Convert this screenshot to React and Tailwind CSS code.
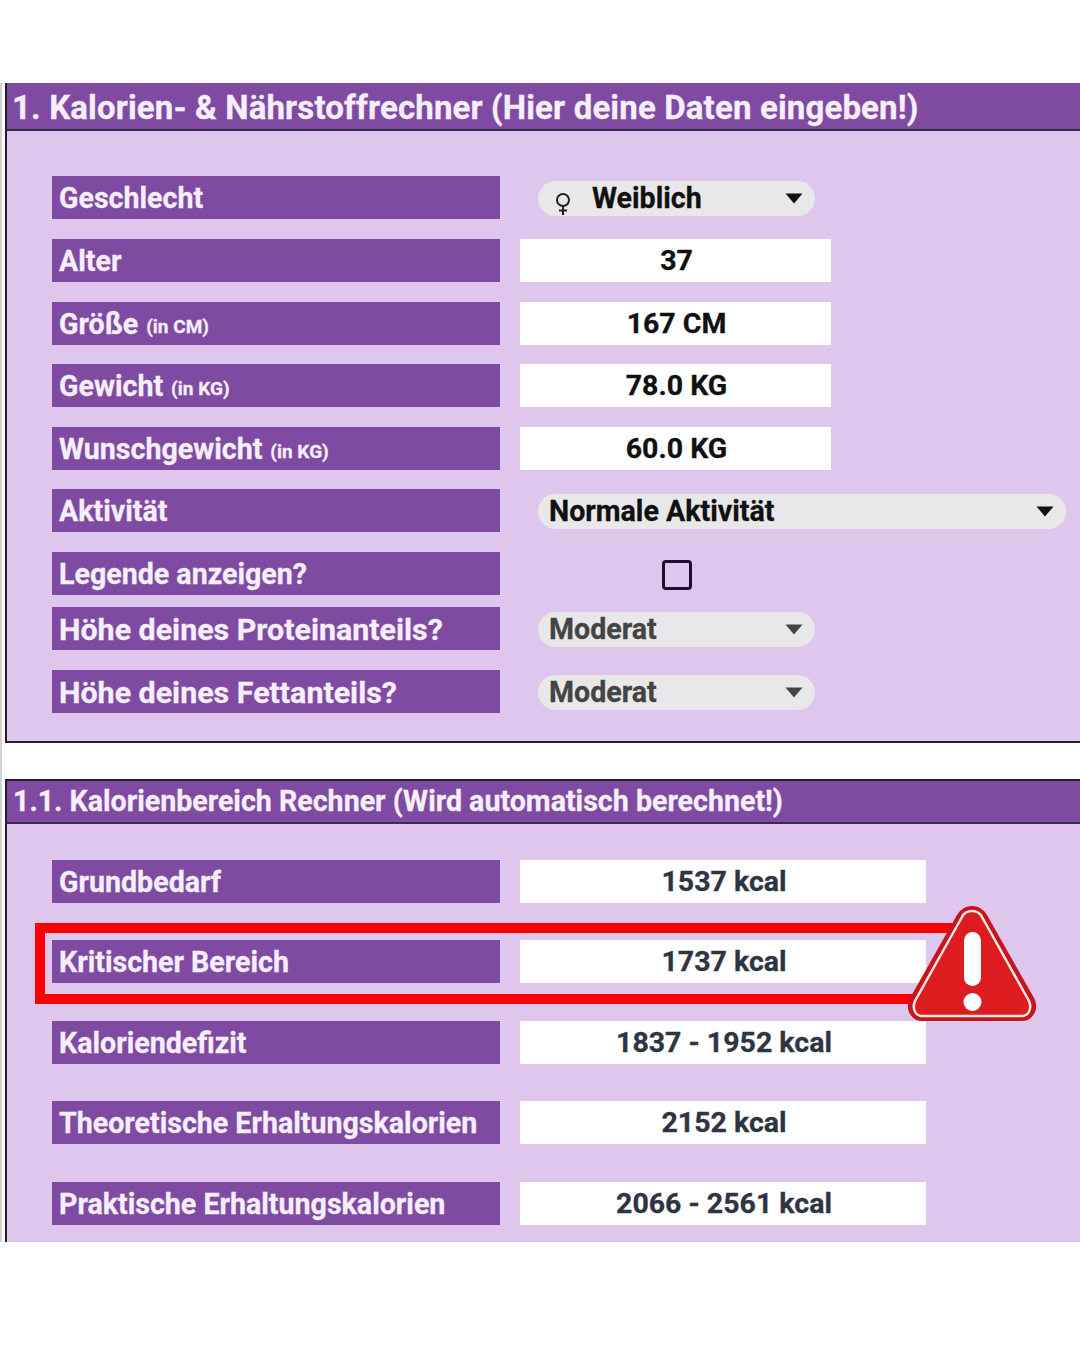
import React from "react";

const font = { fontFamily: "Roboto, sans-serif" };

function Label({ children, unit, big }) {
  return (
    <div
      className={`${big ? "text-[30.4px]" : "text-[28.6px]"} w-[448px] h-[43px] shrink-0 bg-[#7f4ba2] flex items-center pl-[7px] pt-[2px] font-bold text-[#f6eefa] whitespace-nowrap`}
    >
      {children}
      {unit && <span className="ml-[8px] mt-[5px] text-[19px]">{unit}</span>}
    </div>
  );
}

function Value({ children, wide }) {
  return (
    <div
      className={`${wide ? "w-[406px] text-[#2f3442] text-[28.5px]" : "w-[311px] text-[#111] text-[28.5px]"} h-[43px] ml-[20px] pt-[2px] pl-[2px] bg-white flex items-center justify-center font-bold`}
    >
      {children}
    </div>
  );
}

function Caret({ muted }) {
  return (
    <svg width="18" height="11" viewBox="0 0 18 11" className="shrink-0">
      <path d="M0.5 0.5 H17.5 L9 10.5 Z" fill={muted ? "#444" : "#111"} />
    </svg>
  );
}

function Select({ children, wide, muted, icon }) {
  return (
    <div
      className={`${wide ? "w-[528px]" : "w-[277px]"} ${muted ? "text-[#444]" : "text-[#111]"} h-[35px] ml-[38px] mt-[2px] pr-[12px] pl-[11px] rounded-[18px] bg-[#e8e8ea] flex items-center text-[28.6px] font-bold`}
    >
      {icon}
      <span className="flex-1 whitespace-nowrap">{children}</span>
      <Caret muted={muted} />
    </div>
  );
}

const FemaleIcon = (
  <svg width="16" height="24" viewBox="0 0 16 24" className="ml-[6px] mr-[21px] mt-[10px] shrink-0">
    <circle cx="8" cy="8" r="6" fill="none" stroke="#222" strokeWidth="2" />
    <path d="M8 14 V23 M4 18.5 H12" stroke="#222" strokeWidth="2" fill="none" />
  </svg>
);

function Row({ label, unit, big, mt, children }) {
  return (
    <div className={`flex items-center ${mt}`}>
      <Label unit={unit} big={big}>{label}</Label>
      {children}
    </div>
  );
}

function Warning() {
  return (
    <svg width="130" height="118" viewBox="0 0 130 118" className="absolute left-[855px] top-[-35px] overflow-visible">
      <path
        d="M65 1 C58 1 53 5 50 10 L3 93 C-3 104 4 116 15 116 H115 C126 116 133 104 127 93 L80 10 C77 5 72 1 65 1 Z"
        fill="#c4161c"
      />
      <path
        d="M65 6 C61 6 57 8 55 12 L8 96 C5 103 8 111 15 111 H115 C122 111 125 103 122 96 L75 12 C73 8 69 6 65 6 Z"
        fill="#dc1c1f"
        stroke="#fbe4e4"
        strokeWidth="2.5"
      />
      <rect x="57" y="27" width="17" height="54" rx="8.5" fill="#ffffff" />
      <circle cx="65.5" cy="97" r="9" fill="#ffffff" />
    </svg>
  );
}

export default function App() {
  return (
    <div className="h-[1350px] bg-white pt-[83px] [-webkit-text-stroke:0.3px_currentColor]" style={font}>
      <div className="h-[1159px] border-l-2 border-[#d2d2d2] pl-[3px] overflow-hidden">
        {/* panel 1 */}
        <div className="h-[660px] bg-[#dfc6ed] border-l-2 border-b-2 border-[#23202b]">
          <div className="h-[48px] bg-[#7f4ba2] border-b-2 border-[#3a2a52] flex items-center pl-[5px] pt-[4px] text-[33px] font-bold text-[#f6eefa] tracking-[0.15px] whitespace-nowrap">
            1. Kalorien- &amp; Nährstoffrechner (Hier deine Daten eingeben!)
          </div>
          <div className="pl-[45px] pt-[45px]">
            <Row label="Geschlecht" mt="mt-0">
              <Select icon={FemaleIcon}>Weiblich</Select>
            </Row>
            <Row label="Alter" mt="mt-[20px]">
              <Value>37</Value>
            </Row>
            <Row label="Größe" unit="(in CM)" mt="mt-[20px]">
              <Value>167 CM</Value>
            </Row>
            <Row label="Gewicht" unit="(in KG)" mt="mt-[19px]">
              <Value>78.0 KG</Value>
            </Row>
            <Row label="Wunschgewicht" unit="(in KG)" mt="mt-[20px]">
              <Value>60.0 KG</Value>
            </Row>
            <Row label="Aktivität" mt="mt-[19px]">
              <Select wide>Normale Aktivität</Select>
            </Row>
            <Row label="Legende anzeigen?" mt="mt-[20px]">
              <div className="w-[277px] ml-[38px] mt-[3px] flex justify-center">
                <div className="w-[30px] h-[30px] rounded-[4px] border-[3.5px] border-[#1c0f2c]" />
              </div>
            </Row>
            <Row label="Höhe deines Proteinanteils?" big mt="mt-[12px]">
              <Select muted>Moderat</Select>
            </Row>
            <Row label="Höhe deines Fettanteils?" big mt="mt-[20px]">
              <Select muted>Moderat</Select>
            </Row>
          </div>
        </div>

        {/* panel 2 */}
        <div className="mt-[36px] h-[464px] bg-[#dfc6ed] border-l-2 border-t-2 border-[#23202b]">
          <div className="h-[43px] bg-[#7f4ba2] border-b-2 border-[#3a2a52] flex items-center pl-[6px] text-[28.6px] font-bold text-[#f6eefa] whitespace-nowrap">
            1.1. Kalorienbereich Rechner (Wird automatisch berechnet!)
          </div>
          <div className="pl-[45px] pt-[36px]">
            <Row label="Grundbedarf" mt="mt-0">
              <Value wide>1537 kcal</Value>
            </Row>
            <div className="relative mt-[37px]">
              <Row label="Kritischer Bereich" mt="mt-0">
                <Value wide>1737 kcal</Value>
              </Row>
              <div className="absolute left-[-17px] top-[-17px] w-[925px] h-[81px] border-[10px] border-[#ff0000]" />
              <Warning />
            </div>
            <Row label="Kaloriendefizit" mt="mt-[38px]">
              <Value wide>1837 - 1952 kcal</Value>
            </Row>
            <Row label="Theoretische Erhaltungskalorien" mt="mt-[37px]">
              <Value wide>2152 kcal</Value>
            </Row>
            <Row label="Praktische Erhaltungskalorien" mt="mt-[38px]">
              <Value wide>2066 - 2561 kcal</Value>
            </Row>
          </div>
        </div>
      </div>
    </div>
  );
}
